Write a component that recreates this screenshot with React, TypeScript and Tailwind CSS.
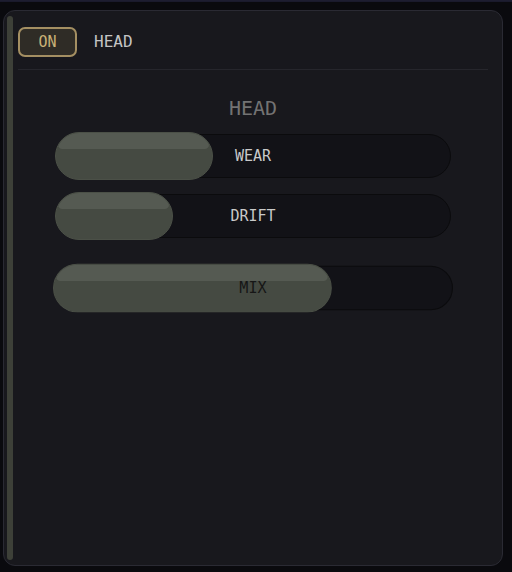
const mono = "font-['DejaVu_Sans_Mono',monospace]";

interface SliderProps {
  label: string;
  value: number;
  active?: boolean;
}

function Slider({ label, value, active }: SliderProps) {
  return (
    <div
      className={`relative mx-auto h-[44px] w-[396px] rounded-full border border-[#0b0b0d] bg-[#121217] ${
        active ? "scale-[1.01]" : ""
      }`}
    >
      {/* Fill */}
      <div
        className="absolute -left-[1px] -top-[3px] -bottom-[3px] overflow-hidden rounded-full border border-[#4b5047] bg-[#454a42]"
        style={{ width: `${value}%` }}
      >
        <div className="absolute left-[2px] right-[3px] top-0 h-[16px] rounded-t-[22px] rounded-b-[8px] bg-[#555a52]" />
      </div>
      <div
        className={`relative flex h-full items-center justify-center text-[15px] ${mono} ${
          active ? "text-[#161616]" : "text-[#c9c9c9]"
        }`}
      >
        {label}
      </div>
    </div>
  );
}

export default function App() {
  return (
    <div className="h-[572px] w-[512px] overflow-hidden bg-[#0a0a0e]">
      <div className="h-[2px] border-t border-[#1d1d30] bg-[#1a1a2c]" />
      <div className="ml-[3px] mt-[8px] flex h-[556px] w-[500px] rounded-[12px] border border-[#2a2a33] bg-[#18181d]">
        {/* Side rail */}
        <div className="my-[5px] ml-[3px] w-[6px] rounded-full bg-[#3d4038]" />

        {/* Content */}
        <div className="flex flex-1 flex-col pl-[5px] pr-[14px] pt-[16px]">
          <div className="flex h-[30px] items-center gap-[17px]">
            <button
              className={`flex h-[30px] w-[59px] items-center justify-center rounded-[7px] border-2 border-[#a48f62] bg-[#2f2c26] text-[15px] text-[#c9b277] ${mono}`}
            >
              ON
            </button>
            <span className={`text-[16px] text-[#c4c4c4] ${mono}`}>HEAD</span>
          </div>

          <div className="mt-[12px] h-[1px] bg-[#26262c]" />

          <div className={`mt-[24px] text-center text-[20px] leading-[28px] text-[#737373] ${mono}`}>HEAD</div>

          <div className="mt-[12px] flex flex-col gap-[16px]">
            <Slider label="WEAR" value={40} />
            <Slider label="DRIFT" value={30} />
          </div>
          <div className="mt-[28px]">
            <Slider label="MIX" value={70} active />
          </div>
        </div>
      </div>
    </div>
  );
}
